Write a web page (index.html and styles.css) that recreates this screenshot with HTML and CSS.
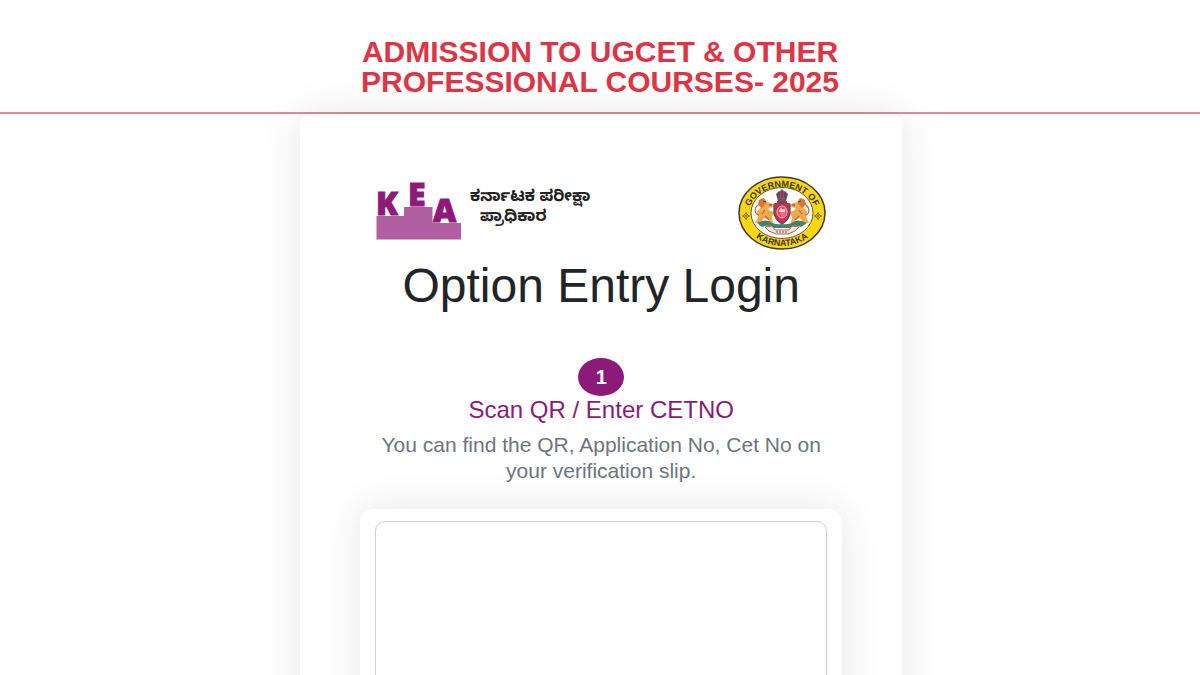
FILE: index.html
```
<!DOCTYPE html>
<html lang="en">
<head>
    <meta charset="UTF-8">
    <meta name="viewport" content="width=device-width, initial-scale=1.0">
    <title>Option Entry Login</title>
    <link rel="stylesheet" href="styles.css">
</head>
<body>
    <header class="page-header">
        <h1 class="page-title">ADMISSION TO UGCET &amp; OTHER<br>PROFESSIONAL COURSES- 2025</h1>
    </header>

    <main class="login-card">
        <div class="logos">
            <div class="kea">
                <svg class="kea-logo" viewBox="0 0 86 64" role="img" aria-label="KEA">
                    <path d="M0.500 40H28V31H56.500V47H85V63.500H0.500Z" fill="#b05fa0"/>
                    <g class="kea-letters">
                        <text x="0" y="39">K</text>
                        <text x="32" y="30">E</text>
                        <text x="57" y="46">A</text>
                    </g>
                </svg>
                <p class="kea-name" lang="kn">ಕರ್ನಾಟಕ ಪರೀಕ್ಷಾ<br><span class="kea-name-second">ಪ್ರಾಧಿಕಾರ</span></p>
            </div>

            <svg class="emblem" viewBox="0 0 88 74" role="img" aria-label="Government of Karnataka">
                <defs>
                    <path id="arc-top" d="M10.500 39A33.500 28 0 0 1 77.500 39"/>
                    <path id="arc-bottom" d="M5 37A39 33 0 0 0 83 37"/>
                </defs>
                <ellipse cx="44" cy="37" rx="43" ry="36" fill="#f8d616" stroke="#3c3830" stroke-width="1.500"/>
                <ellipse cx="44" cy="37" rx="31" ry="25.500" fill="#fdfcfa" stroke="#6b5b2a" stroke-width="1"/>
                <g class="emblem-text">
                    <text><textPath href="#arc-top" startOffset="50%" text-anchor="middle">GOVERNMENT OF</textPath></text>
                    <text><textPath href="#arc-bottom" startOffset="50%" text-anchor="middle">KARNATAKA</textPath></text>
                </g>
                <g fill="none" stroke="#8c7417">
                    <path d="M5 40L8 37L11 40L8 43ZM8 36V44M4 40H12"/>
                    <path d="M77 40L80 37L83 40L80 43ZM80 36V44M76 40H84"/>
                </g>
                <!-- lions -->
                <g id="lion">
                    <path d="M35 28L29 26L26 22L22 23L20 28L23 31L19 36L20 41L17 47L23 47L26 42L31 44L30 49L35 48L34 40L38 36L32 35L30 32L36 31Z" fill="#eda94e"/>
                    <path d="M21 24L26 22L28 27L24 32L20 29Z" fill="#d4793a"/>
                    <path d="M21 39C16 38 16 32 20 29M27 34L24 38M27 40L31 44" fill="none" stroke="#c9652d" stroke-width="1.200"/>
                    <path d="M25 25L28 26M31 29H34" stroke="#713b28" stroke-width="1"/>
                </g>
                <use href="#lion" transform="translate(88 0) scale(-1 1)"/>
                <!-- crest -->
                <path d="M40 25L38 18L41 15L44 17L47 15L50 18L48 25Z" fill="#4e5980"/>
                <path d="M40 17L44 13L48 17V23H40Z" fill="#b2474d"/>
                <path d="M41 16V22M44 15V22M47 16V22" stroke="#283c6b"/>
                <path d="M39 26H49" stroke="#a33d44" stroke-width="2"/>
                <!-- shield -->
                <path d="M36 28Q44 25 52 28V37Q51 44 44 48Q37 44 36 37Z" fill="#d52a48" stroke="#345674" stroke-width="1.200"/>
                <ellipse cx="44" cy="36" rx="5" ry="6" fill="#e94d67" stroke="#f7b8bb"/>
                <path d="M41 35L43 32L45 34L47 33V36H42ZM42 38H47M43 40H46" fill="#f9d5d8" stroke="#f9d5d8" stroke-width="0.500"/>
                <!-- foliage and ribbon -->
                <path d="M19 47Q29 42 34 47Q40 49 44 48Q48 49 54 47Q59 42 69 47L63 51Q55 48 52 52H36Q31 48 24 51Z" fill="#43836a"/>
                <path d="M27 51L34 50L37 54H51L54 50L61 51L57 55L50 58H38L31 55Z" fill="#eee4df" stroke="#c45e4e"/>
                <path d="M38 56H50" stroke="#795d56" stroke-width="1" stroke-dasharray="2 1"/>
            </svg>
        </div>

        <h2 class="login-title">Option Entry Login</h2>

        <section class="step">
            <span class="step-number">1</span>
            <h3 class="step-title">Scan QR / Enter CETNO</h3>
            <p class="step-text">You can find the QR, Application No, Cet No on your verification slip.</p>
        </section>

        <div class="scanner-card">
            <div class="scanner"></div>
        </div>
    </main>
</body>
</html>
```
FILE: styles.css
```
* {
    box-sizing: border-box;
}

body {
    margin: 0;
    font-family: "Liberation Sans", Arial, sans-serif;
    color: #212529;
    background-color: white;
    overflow-x: hidden;
}

h1,
h2,
h3,
p {
    margin: 0;
    font-weight: normal;
}

.page-header {
    padding: 37px 20px 15px;
    border-bottom: 2px solid #e48b94;
    text-align: center;
}

.page-title {
    font-size: 30px;
    font-weight: bold;
    line-height: 30px;
    color: #dc3545;
}

.login-card {
    width: 50.2%;
    margin-left: 25%;
    padding: 60px;
    border-radius: 10px;
    box-shadow: 0 0 40px rgba(0, 0, 0, 0.1);
    text-align: center;
}

.logos {
    display: flex;
    align-items: flex-start;
    justify-content: space-between;
    padding: 2px 16px 0;
}

.kea {
    display: flex;
    gap: 8px;
}

.kea-logo {
    width: 86px;
    height: 64px;
    overflow: visible;
}

.kea-letters {
    font-family: "Open Sans", sans-serif;
    font-size: 32px;
    font-weight: 800;
    fill: #8f1979;
    stroke: #8f1979;
    stroke-width: 1px;
}

.kea-name {
    padding-top: 13px;
    font-family: "Noto Sans Kannada", "Noto Sans", sans-serif;
    font-size: 16px;
    font-weight: bold;
    line-height: 20px;
    text-align: left;
    color: #222;
}

.kea-name-second {
    padding-left: 10px;
}

.emblem {
    width: 88px;
    height: 74px;
}

.emblem-text {
    font-size: 9px;
    font-weight: bold;
    fill: #3d3517;
}

.login-title {
    margin-top: 8px;
    font-size: 48px;
    line-height: 56px;
}

.step {
    padding: 44px 16px 0;
}

.step-number {
    display: flex;
    align-items: center;
    justify-content: center;
    width: 46px;
    height: 38px;
    margin: 0 auto;
    border-radius: 50%;
    background-color: #8c1a78;
    color: white;
    font-size: 20px;
    font-weight: bold;
}

.step-title {
    font-size: 24px;
    line-height: 28px;
    color: #8c1a78;
}

.step-text {
    margin-top: 8px;
    font-size: 21px;
    line-height: 26px;
    color: #6c757d;
}

.scanner-card {
    margin-top: 25px;
    padding: 12px 15px;
    border-radius: 14px;
    box-shadow: 0 0 40px rgba(0, 0, 0, 0.1);
}

.scanner {
    height: 300px;
    border: 1px solid #cfcfcf;
    border-radius: 10px;
}
```
